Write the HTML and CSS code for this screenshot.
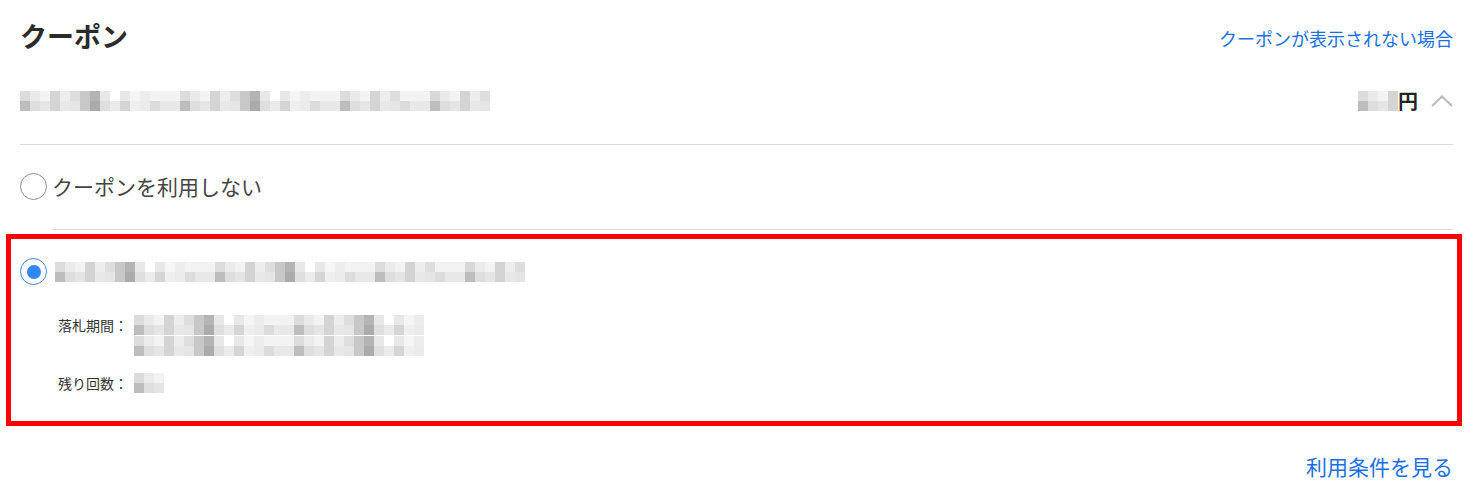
FILE: index.html
```html
<!DOCTYPE html>
<html lang="ja">
<head>
<meta charset="utf-8">
<title>クーポン</title>
<link rel="stylesheet" href="styles.css">
</head>
<body>
<div class="page">
  <header class="head">
    <h1 class="title">クーポン</h1>
    <a class="link link-top" href="#">クーポンが表示されない場合</a>
  </header>

  <div class="summary">
    <div class="mosaic" data-cells="47"></div>
    <div class="price">
      <div class="mosaic" data-cells="4"></div>
      <span class="yen">円</span>
      <svg class="chevron" width="22" height="12" viewBox="0 0 22 12" aria-hidden="true">
        <polyline points="1,11 11,1.5 21,11" fill="none" stroke="#bdbab5" stroke-width="2"/>
      </svg>
    </div>
  </div>

  <div class="option">
    <span class="radio"></span>
    <span class="opt-text">クーポンを利用しない</span>
  </div>
  <div class="divider"></div>

  <div class="coupon">
    <div class="coupon-head">
      <span class="radio checked"></span>
      <div class="mosaic" data-cells="47"></div>
    </div>
    <dl class="details">
      <div class="drow">
        <dt>落札期間：</dt>
        <dd class="stack">
          <div class="mosaic" data-cells="29"></div>
          <div class="mosaic" data-cells="29"></div>
        </dd>
      </div>
      <div class="drow">
        <dt>残り回数：</dt>
        <dd><div class="mosaic" data-cells="3"></div></dd>
      </div>
    </dl>
  </div>

  <div class="foot">
    <a class="link link-foot" href="#">利用条件を見る</a>
  </div>
</div>
<script src="script.js"></script>
</body>
</html>
```

FILE: styles.css
```css
* { box-sizing: border-box; }
html, body { margin: 0; padding: 0; background: #fff; }
body {
  font-family: "Noto Sans CJK JP", "Noto Sans", sans-serif;
  color: #333;
}
.page {
  width: 1474px;
  padding: 0 21px 0 20px;
}
.head {
  height: 70px;
  display: flex;
  align-items: center;
  justify-content: space-between;
}
.title {
  margin: 0;
  font-size: 27px;
  line-height: 1;
  font-weight: 700;
  color: #2b2b2b;
}
.link {
  color: #1a6fe6;
  text-decoration: none;
}
.link-top {
  font-size: 18px;
  line-height: 1;
  margin-top: 6px;
}
.summary {
  display: flex;
  align-items: center;
  justify-content: space-between;
  padding: 21px 0 33px;
  border-bottom: 1px solid #dcdcdc;
}
.price {
  display: flex;
  align-items: center;
}
.yen {
  font-size: 20px;
  line-height: 20px;
  font-weight: 700;
  color: #222;
}
.chevron {
  margin-left: 13px;
  display: block;
}
.mosaic {
  display: grid;
  grid-template-rows: 10px 10px;
  grid-auto-flow: column;
  grid-auto-columns: 10px;
}
.option {
  display: flex;
  align-items: center;
  gap: 5px;
  padding: 28px 0 29px;
}
.radio {
  width: 27px;
  height: 27px;
  border-radius: 50%;
  border: 1px solid #8c8c8c;
  display: flex;
  align-items: center;
  justify-content: center;
  flex: none;
}
.radio.checked {
  border-color: #3a86f5;
}
.radio.checked::after {
  content: "";
  width: 14px;
  height: 14px;
  border-radius: 50%;
  background: #3385fb;
}
.opt-text {
  font-size: 21px;
  line-height: 27px;
  color: #444;
}
.divider {
  margin-left: 33px;
  border-top: 1px solid #dcdcdc;
}
.coupon {
  margin: 4px -9px 0 -14px;
  border: 5px solid #ff0000;
  padding: 19px 0 28px 9px;
}
.coupon-head {
  display: flex;
  align-items: center;
  gap: 8px;
}
.details {
  margin: 30px 0 0;
  padding-left: 38px;
  display: flex;
  flex-direction: column;
  gap: 17px;
}
.drow {
  display: flex;
  align-items: flex-start;
}
.drow dt {
  width: 76px;
  font-size: 14px;
  line-height: 20px;
  color: #333;
}
.drow dd {
  margin: 0;
}
.stack {
  display: flex;
  flex-direction: column;
  gap: 1px;
}
.foot {
  display: flex;
  justify-content: flex-end;
  margin-top: 25px;
}
.link-foot {
  font-size: 21px;
  line-height: 30px;
}
```

FILE: script.js
```js
(function () {
  var r1 = ["dc","eb","f3","d4","ed","de","c8","b4","e8","ff","e8","f5","ed","f3","f3","f3",
            "dc","eb","f3","d4","ed","de","c8","b4","e8","ff","e8","f5","ed","f3","f3","f3",
            "dc","eb","f3","d4","ed","de","f3","f3","f3","d8","eb","f3","d4","ed","de"];
  var r2 = ["bd","de","e5","d4","e8","e5","c8","ab","df","eb","d5","ef","eb","dc","e8","e8",
            "bd","de","e5","d4","e8","e5","c8","ab","df","eb","d5","ef","eb","dc","e8","e8",
            "bd","de","e5","d4","e8","e5","dc","e8","e8","bd","de","e5","d4","e8","e5"];
  var els = document.querySelectorAll(".mosaic");
  els.forEach(function (el) {
    var n = parseInt(el.getAttribute("data-cells"), 10) || 0;
    for (var i = 0; i < n; i++) {
      [r1[i % r1.length], r2[i % r2.length]].forEach(function (c) {
        var s = document.createElement("span");
        s.style.background = "#" + c + c + c;
        el.appendChild(s);
      });
    }
  });
})();
```
